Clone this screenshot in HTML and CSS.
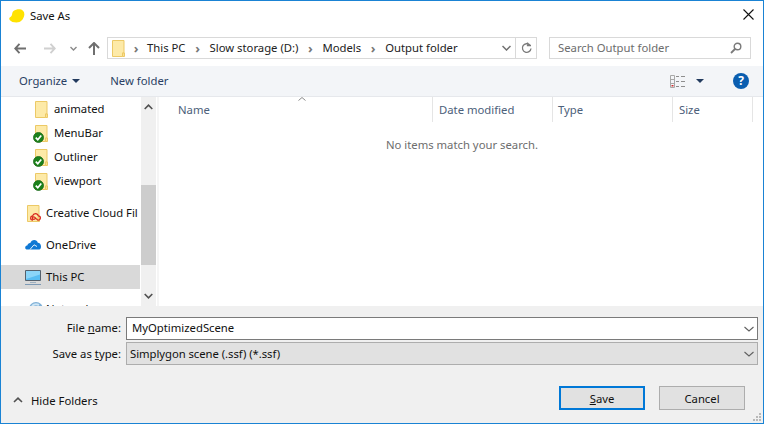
FILE: index.html
```html
<!DOCTYPE html>
<html lang="en">
<head>
<meta charset="utf-8">
<title>Save As</title>
<link rel="stylesheet" href="styles.css">
</head>
<body>
<svg class="defs" width="0" height="0" aria-hidden="true">
  <symbol id="folder" viewBox="0 0 13 17">
    <path d="M.5.500h11.500v12.500h-1.500v3.500H.5z" fill="#fdeaa8" stroke="#ecc966"/>
    <path d="M10.500 13h2v3.500h-2z" fill="#fbe08f" stroke="#ecc966"/>
  </symbol>
  <symbol id="sync" viewBox="0 0 12 12">
    <circle cx="6" cy="6" r="5.500" fill="#1b811b" stroke="#136313" stroke-width=".8"/>
    <path d="M3 6.200l2.200 2.200L9 3.800" fill="none" stroke="#fff" stroke-width="1.900"/>
  </symbol>
</svg>
<main class="window">
  <header class="titlebar">
    <svg class="app-icon" width="16" height="14" viewBox="0 0 16 14"><path d="M4.500 2C6.500.5 9 0 11 .3c3 .5 4.700 2.700 4.300 5.700-.5 4-3.500 7.500-7.800 7.500-3 0-5.500-.8-6.800-2.500C-.2 10 .3 8.500 1.500 8 2.800 7.300 3 5.800 3.200 4.500 3.400 3.300 3.800 2.500 4.500 2z" fill="#ffe200"/></svg>
    <span class="title">Save As</span>
    <svg class="close" width="11" height="11" viewBox="0 0 11 11"><path d="M.5.500l10 10M10.500.500l-10 10" stroke="#111" stroke-width="1.100" fill="none"/></svg>
  </header>

  <nav class="navbar">
    <svg class="nav-icon back" width="12" height="11" viewBox="0 0 12 11"><path d="M5.500.8L1.200 5.500l4.300 4.700M1.200 5.500H12" fill="none" stroke="#6f6f6f" stroke-width="1.900"/></svg>
    <svg class="nav-icon forward" width="12" height="11" viewBox="0 0 12 11"><path d="M6.500.8l4.300 4.700-4.300 4.700M10.800 5.500H0" fill="none" stroke="#d0d0d0" stroke-width="1.900"/></svg>
    <svg class="nav-icon recent" width="7" height="5" viewBox="0 0 7 5"><path d="M.5 1l3 3 3-3" fill="none" stroke="#8a8a8a" stroke-width="1.400"/></svg>
    <svg class="nav-icon up" width="12" height="13" viewBox="0 0 12 13"><path d="M1 6l5-5 5 5M6 1.500V13" fill="none" stroke="#6f6f6f" stroke-width="2"/></svg>
    <div class="address">
      <svg class="crumb-folder" width="13" height="17"><use href="#folder"/></svg>
      <span class="sep">›</span><span class="crumb">This PC</span>
      <span class="sep">›</span><span class="crumb">Slow storage (D:)</span>
      <span class="sep">›</span><span class="crumb">Models</span>
      <span class="sep">›</span><span class="crumb">Output folder</span>
      <svg class="addr-chevron" width="9" height="6" viewBox="0 0 9 6"><path d="M.5 1l4 4 4-4" fill="none" stroke="#707070" stroke-width="1.500"/></svg>
      <span class="refresh">
        <svg width="11" height="12" viewBox="0 0 11 12"><path d="M8.800 3A4.300 4.300 0 1 0 10 6.500M6.500 .5v3h3.500" fill="none" stroke="#7a7a7a" stroke-width="1.300"/></svg>
      </span>
    </div>
    <div class="search">
      <span class="search-text">Search Output folder</span>
      <svg width="12" height="12" viewBox="0 0 12 12"><circle cx="7.500" cy="4.500" r="3.300" fill="none" stroke="#7a7a7a" stroke-width="1.400"/><path d="M5 7l-4 4" stroke="#7a7a7a" stroke-width="1.800"/></svg>
    </div>
  </nav>

  <div class="toolbar">
    <span class="tool organize">Organize</span>
    <span class="caret"></span>
    <span class="tool new-folder">New folder</span>
    <svg class="view-icon" width="16" height="13" viewBox="0 0 16 13">
      <path d="M.5.500h4v12h-4zM.5 4.500h4M.5 8.500h4" fill="none" stroke="#a8a8a8"/>
      <path d="M1.500 10h2v1.500h-2z" fill="#d03030"/>
      <path d="M6 1.500h3M11 1.500h4M6 6.500h3M11 6.500h4M6 11.500h3M11 11.500h4" stroke="#8e8e8e"/>
    </svg>
    <span class="caret view-caret"></span>
    <span class="help">?</span>
  </div>

  <div class="content">
    <aside class="tree">
      <div class="group">
        <div class="row child"><svg class="ico-folder" width="13" height="17"><use href="#folder"/></svg><span>animated</span></div>
        <div class="row child"><span class="stack"><svg class="ico-folder" width="13" height="17"><use href="#folder"/></svg><svg class="badge" width="11" height="11"><use href="#sync"/></svg></span><span>MenuBar</span></div>
        <div class="row child"><span class="stack"><svg class="ico-folder" width="13" height="17"><use href="#folder"/></svg><svg class="badge" width="11" height="11"><use href="#sync"/></svg></span><span>Outliner</span></div>
        <div class="row child"><span class="stack"><svg class="ico-folder" width="13" height="17"><use href="#folder"/></svg><svg class="badge" width="11" height="11"><use href="#sync"/></svg></span><span>Viewport</span></div>
      </div>
      <div class="group">
        <div class="row top"><span class="stack cc"><svg class="ico-folder" width="13" height="17"><use href="#folder"/></svg><svg class="cc-badge" width="11" height="8" viewBox="0 0 11 8"><path d="M3 7.200C1.500 7.200.6 6.200.6 5S1.500 3 2.600 2.900C3 1.500 4.200.6 5.500.6c1.400 0 2.500 1 2.800 2.300 1.200 0 2.100.9 2.100 2.100s-1 2.200-2.200 2.200C6.500 7.200 5.500 3.800 3.800 3.800c-.9 0-1.500.6-1.500 1.300S2.900 6.300 3.800 6.300c1 0 1.700-.9 2.200-1.700" fill="none" stroke="#d8261c" stroke-width="1.200"/></svg></span><span>Creative Cloud Fil</span></div>
      </div>
      <div class="group">
        <div class="row top"><svg class="ico-cloud" width="16" height="10" viewBox="0 0 16 10"><path d="M1.500 9.500C.3 9.200 0 8 .3 7c.3-1 1-1.500 2-1.500C2.700 3.800 4 2.800 5.300 3 6 1.200 7.500 0 9.300 0c1.700 0 3 1 3.500 2.700 1.800 0 3.200 1.500 3.200 3.800 0 1.500-.5 2.500-1.500 3z" fill="#0f78d4"/><path d="M5 9.500L9 4.800l3 1.700" fill="none" stroke="#fff" stroke-width=".9"/></svg><span>OneDrive</span></div>
      </div>
      <div class="group">
        <div class="row top selected"><svg class="ico-pc" width="16" height="15" viewBox="0 0 16 15"><path d="M.5.500h15v10H.5z" fill="#58bdf2" stroke="#54606c"/><path d="M1 1h14v3.500L1 9z" fill="#8bd5f8"/><path d="M5 12h6v1H5z" fill="#9fb0bf"/><path d="M0 14h16v1H0z" fill="#7e9ab5"/></svg><span>This PC</span></div>
      </div>
      <div class="group">
        <div class="row top"><svg class="ico-net" width="14" height="14" viewBox="0 0 14 14"><circle cx="7" cy="7" r="7" fill="#7fb0d6"/><path d="M3 4c2-2 5-2 7-1" stroke="#cfe6f5" stroke-width="2" fill="none"/></svg><span>Network</span></div>
      </div>
    </aside>
    <div class="scrollbar">
      <svg class="sb-arrow" width="9" height="6" viewBox="0 0 9 6"><path d="M.7 5l3.800-3.800L8.300 5" fill="none" stroke="#505050" stroke-width="1.600"/></svg>
      <div class="sb-track"><div class="sb-thumb"></div></div>
      <svg class="sb-arrow" width="9" height="6" viewBox="0 0 9 6"><path d="M.7 1l3.800 3.800L8.300 1" fill="none" stroke="#505050" stroke-width="1.600"/></svg>
    </div>
    <section class="list">
      <div class="columns">
        <div class="col col-name">Name<svg class="sort" width="8" height="4" viewBox="0 0 8 4"><path d="M.5 3.500L4 .5l3.500 3" fill="none" stroke="#8a8a8a"/></svg></div>
        <div class="col col-date">Date modified</div>
        <div class="col col-type">Type</div>
        <div class="col col-size">Size</div>
      </div>
      <p class="empty">No items match your search.</p>
    </section>
  </div>

  <footer class="bottom">
    <div class="form">
      <label class="form-label file-label">File <u>n</u>ame:</label>
      <div class="field input"><span class="input-text">MyOptimizedScene</span><svg width="10" height="6" viewBox="0 0 10 6"><path d="M.5 1l4.500 4L9.500 1" fill="none" stroke="#606060" stroke-width="1.100"/></svg></div>
      <label class="form-label">Save as <u>t</u>ype:</label>
      <div class="field select"><span class="select-text">Simplygon scene (.ssf) (*.ssf)</span><svg width="10" height="6" viewBox="0 0 10 6"><path d="M.5 1l4.500 4L9.500 1" fill="none" stroke="#606060" stroke-width="1.100"/></svg></div>
    </div>
    <div class="actions">
      <div class="hide-folders">
        <svg width="10" height="6" viewBox="0 0 10 6"><path d="M1 5l4-3.800L9 5" fill="none" stroke="#505050" stroke-width="1.600"/></svg>
        <span>Hide Folders</span>
      </div>
      <button class="btn primary" type="button"><u>S</u>ave</button>
      <button class="btn" type="button">Cancel</button>
    </div>
    <svg class="grip" width="9" height="9" viewBox="0 0 9 9"><path d="M6 0h2v2H6zM3 3h2v2H3zM6 3h2v2H6zM0 6h2v2H0zM3 6h2v2H3zM6 6h2v2H6z" fill="#b8b8b8"/></svg>
  </footer>
</main>
</body>
</html>
```

FILE: styles.css
```css
* { box-sizing: border-box; }
html, body { margin: 0; padding: 0; }
body {
  width: 764px;
  height: 424px;
  overflow: hidden;
  background: #fff;
  font-family: "Noto Sans", "Open Sans", "Liberation Sans", sans-serif;
  font-size: 11.3px;
  color: #111;
}
.defs { position: absolute; }
.window {
  width: 764px;
  height: 424px;
  border: 1px solid #1a83d4;
  display: flex;
  flex-direction: column;
  background: #fff;
  position: relative;
}

/* title */
.titlebar {
  height: 29px;
  flex: none;
  display: flex;
  align-items: center;
  padding: 0 9px 0 8px;
}
.app-icon { flex: none; }
.title { margin-left: 5px; flex: 1; color: #111; padding-bottom: 1px; }
.close { position: relative; top: -1px; }

/* nav */
.navbar {
  height: 36px;
  flex: none;
  display: flex;
  align-items: center;
}
.nav-icon { flex: none; }
.back { margin-left: 13px; }
.forward { margin-left: 18px; }
.recent { margin-left: 14px; }
.up { margin-left: 11px; }
.address {
  margin-left: 7px;
  width: 430px;
  height: 22px;
  border: 1px solid #d9d9d9;
  display: flex;
  align-items: center;
  padding-left: 4px;
  color: #222;
}
.crumb { flex: none; padding-bottom: 1px; }
.crumb-folder { flex: none; }
.sep {
  width: 24px;
  flex: none;
  text-align: center;
  color: #777;
  font-size: 13px;
  line-height: 16px;
  font-weight: 700;
}
.address .sep:first-of-type { width: 22px; }
.addr-chevron { margin-left: auto; margin-right: 4px; flex: none; }
.refresh {
  width: 21px;
  height: 20px;
  flex: none;
  border-left: 1px solid #d9d9d9;
  display: flex;
  align-items: center;
  justify-content: center;
}
.search {
  margin-left: 12px;
  width: 202px;
  height: 22px;
  border: 1px solid #d9d9d9;
  display: flex;
  align-items: center;
  justify-content: space-between;
  padding: 0 8px;
  color: #6d6d6d;
}
.search-text { padding-bottom: 1px; }

/* toolbar */
.toolbar {
  height: 31px;
  flex: none;
  background: #f3f5f8;
  border-bottom: 1px solid #e6e8ec;
  display: flex;
  align-items: center;
  color: #2a3f63;
}
.tool { flex: none; padding-bottom: 2px; }
.organize { margin-left: 18px; }
.caret {
  width: 0;
  height: 0;
  margin-left: 5px;
  border-left: 4px solid transparent;
  border-right: 4px solid transparent;
  border-top: 4px solid #223a5e;
}
.new-folder { margin-left: 30px; }
.view-icon { margin-left: auto; }
.view-caret { margin-left: 10px; }
.help {
  margin-left: 29px;
  margin-right: 14px;
  width: 16px;
  height: 16px;
  border-radius: 50%;
  background: #0a5eb0;
  color: #fff;
  font-weight: 700;
  font-size: 12px;
  line-height: 16px;
  text-align: center;
}

/* content */
.content {
  height: 209px;
  flex: none;
  display: flex;
  overflow: hidden;
}
.tree {
  width: 139px;
  flex: none;
  overflow: hidden;
}
.group { margin-bottom: 8px; }
.row {
  height: 24px;
  display: flex;
  align-items: center;
  white-space: nowrap;
  overflow: hidden;
  color: #111;
}
.row > span:last-child { padding-bottom: 2px; }
.row.child { padding-left: 34px; }
.row.child > span:last-child { margin-left: 6px; }
.row.top { padding-left: 24px; }
.row.top > span:last-child { margin-left: 4px; }
.row.selected { background: #d9d9d9; }
.stack { position: relative; display: block; width: 13px; height: 17px; flex: none; }
.ico-folder { display: block; flex: none; }
.badge { position: absolute; left: -2px; bottom: -1px; }
.cc { margin-left: 2px; margin-right: 2px; }
.cc-badge { position: absolute; left: 3px; bottom: 1px; }
.ico-cloud { flex: none; margin-right: 1px; }
.ico-pc { flex: none; margin-right: 1px; }
.ico-net { flex: none; margin-left: 4px; margin-right: -1px; }
.scrollbar {
  width: 15px;
  margin-left: 1px;
  flex: none;
  background: #f0f0f0;
  display: flex;
  flex-direction: column;
  align-items: center;
  padding: 7px 0;
}
.sb-arrow { flex: none; }
.sb-track { flex: 1; align-self: stretch; padding-top: 75px; padding-bottom: 28px; }
.sb-thumb { height: 100%; background: #cdcdcd; }
.list {
  flex: 1;
  border-left: 2px solid #f5f5f5;
  margin-left: 1px;
  min-width: 0;
}
.columns {
  display: grid;
  grid-template-columns: 274px 120px 120px 80px;
  height: 25px;
  color: #4c607a;
}
.col {
  border-right: 1px solid #e5e5e5;
  line-height: 25px;
  padding-left: 5px;
  position: relative;
}
.col-name { padding-left: 19px; }
.col-date { padding-left: 6px; }
.col-size { padding-left: 6px; }
.sort { position: absolute; left: 139px; top: 0; }
.empty {
  margin: 14px 0 0 0;
  text-align: center;
  color: #6d6d6d;
  line-height: 18px;
  width: 606px;
}

/* bottom */
.bottom {
  flex: 1;
  background: #f0f0f0;
  position: relative;
  display: flex;
  flex-direction: column;
  padding: 11px 5px 0 0;
}
.form {
  display: grid;
  grid-template-columns: 125px 1fr;
  grid-auto-rows: 23px;
  row-gap: 2px;
}
.form-label {
  text-align: right;
  padding-right: 5px;
  line-height: 23px;
  color: #111;
}
.file-label { line-height: 21px; }
.field {
  display: flex;
  align-items: center;
  justify-content: space-between;
  padding-right: 3px;
  line-height: 20px;
}
.input {
  background: #fff;
  border: 1px solid #7a7a7a;
  padding-left: 5px;
}
.input-text { padding-bottom: 2px; }
.select {
  background: #e1e1e1;
  border: 1px solid #adadad;
  padding-left: 3px;
}
.select-text { letter-spacing: -0.05px; }
.actions {
  display: flex;
  align-items: center;
  margin-top: 21px;
}
.hide-folders {
  display: flex;
  align-items: center;
  flex: 1;
  padding: 4px 0 0 12px;
}
.hide-folders span { margin-left: 8px; }
.btn {
  width: 86px;
  height: 24px;
  padding: 0;
  font: inherit;
  color: #111;
  background: #e1e1e1;
  border: 1px solid #adadad;
}
.btn.primary { border: 2px solid #0078d7; margin-right: 14px; }
.actions .btn:last-child { margin-right: 13px; }
.grip { position: absolute; right: 1px; bottom: 1px; }
```
